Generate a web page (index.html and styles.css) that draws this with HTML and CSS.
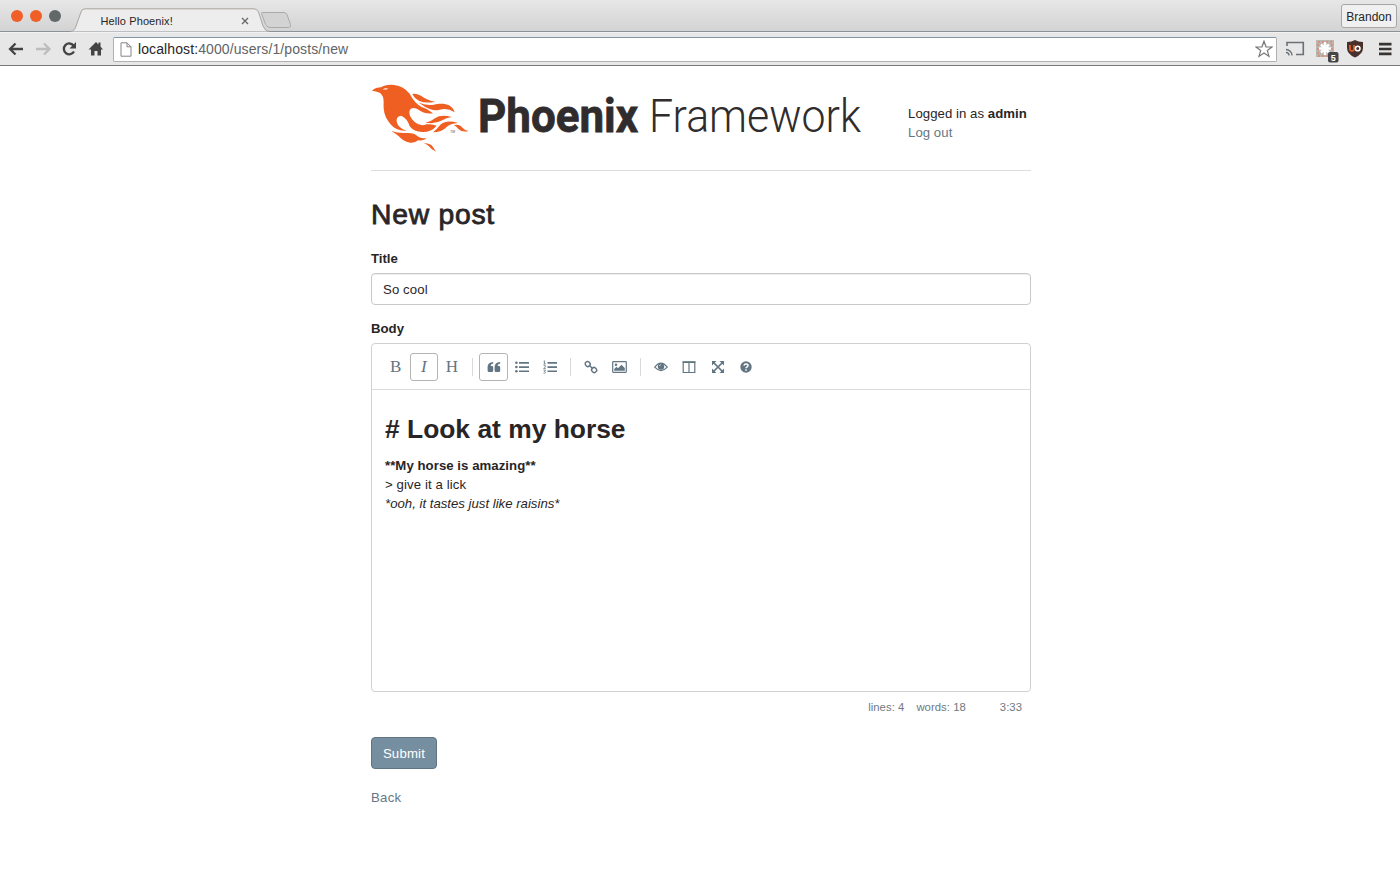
FILE: index.html
```html
<!DOCTYPE html>
<html lang="en">
<head>
<meta charset="utf-8">
<title>Hello Phoenix!</title>
<link rel="stylesheet" href="styles.css">
</head>
<body>
<header class="browser">
  <div class="tabstrip">
    <div class="lights"><i class="light"></i><i class="light"></i><i class="light light-off"></i></div>
    <div class="tab">
      <svg class="tab-shape" width="222" height="24" viewBox="0 0 222 24"><path d="M0 23.5C4 23 5 21 6 18L11 4Q12 .8 15 .8H184Q187 .8 188.500 4L193 18Q195 23 199 23.500" fill="#ededed" stroke="#aaa49f"/><path d="M191.500 5.500Q191 4.500 192.500 4.500H214Q216 4.500 217 6.500L220.500 16.500Q221 19.500 218.500 19.500H200Q197 19.500 195.500 16.500Z" fill="#d3d3d3" stroke="#aaa"/></svg>
      <span class="tab-title">Hello Phoenix!</span>
      <svg class="tab-close" width="8" height="8" viewBox="0 0 8 8"><path d="M1 1l6 6M7 1L1 7" stroke="#666" stroke-width="1.300"/></svg>
    </div>
    <div class="profile">Brandon</div>
  </div>
  <div class="toolbar">
    <svg class="nav" width="106" height="32" viewBox="0 0 106 32" fill="none" stroke="#444" stroke-width="2.300">
      <path d="M10 16H23M15.500 10.500L10 16L15.500 21.500"/>
      <path d="M36 16H49M44 10.500L49.500 16L44 21.500" stroke="#bdbdbd"/>
      <path d="M73.500 12.500A5.400 5.400 0 1 0 74 18.500"/><path d="M76 9V15.500H69.500Z" fill="#444" stroke="none"/>
      <path d="M88.500 16.500L96 9L98.500 11.500V9.500H100.500V13.500L103 16.500H101V22.500H97.500V18H94.500V22.500H91V16.500Z" fill="#444" stroke="none"/>
    </svg>
    <div class="address">
      <svg width="12" height="15" viewBox="0 0 12 15"><path d="M1 .8H7L11 4.800V14.200H1ZM7 .8V4.800H11" fill="#fff" stroke="#858585"/></svg>
      <span class="url"><b>localhost:</b>4000/users/1/posts/new</span>
      <svg class="star" width="18" height="18" viewBox="0 0 18 18"><path d="M9 1.200L11 6.800L17 7L12.300 10.600L14 16.400L9 13L4 16.400L5.700 10.600L1 7L7 6.800Z" fill="#fff" stroke="#777" stroke-width="1.200"/></svg>
    </div>
    <svg class="extensions" width="116" height="30" viewBox="1284 34 116 30">
      <path d="M1287 46V42.500H1303.300V54.500H1296" fill="none" stroke="#697176" stroke-width="1.600"/><path d="M1286 49.500A6 6 0 0 1 1292 55.500M1286 52.500A3 3 0 0 1 1289 55.500" fill="none" stroke="#697176" stroke-width="1.300"/>
      <path d="M1316 40H1334V57H1316Z" fill="#b9b5b3"/><path d="M1318 42H1332V56H1318Z" fill="none" stroke="#ed7040" stroke-dasharray="2 2"/><path d="M1325 42V55M1319 48.500H1331M1321 44.500L1329 52.500M1329 44.500L1321 52.500" stroke="#fff" stroke-width="2.500"/>
      <rect x="1328" y="52" width="10.500" height="10.500" rx="2" fill="#454545"/><text x="1333.200" y="60.500" class="badge-text">5</text>
      <path d="M1355 40Q1358 42 1363 42V48Q1363 54 1355 57.500Q1347 54 1347 48V42Q1352 42 1355 40Z" fill="#49302b"/><path d="M1350 45V49Q1350 51 1352 51T1354 49V45" fill="none" stroke="#f06127" stroke-width="1.600"/><circle cx="1357.700" cy="48.500" r="2.300" fill="none" stroke="#fff" stroke-width="1.600"/>
      <path d="M1379 44.200H1391.500M1379 49H1391.500M1379 53.800H1391.500" stroke="#383432" stroke-width="2.700"/>
    </svg>
  </div>
</header>
<main class="container">
  <div class="header">
    <svg class="logo" width="500" height="84" viewBox="0 0 500 84" role="img" aria-label="Phoenix Framework">
      <g transform="scale(.33333) translate(-21 0)" fill="#f05f22">
        <path d="M24 44Q36 34 51 34Q65 24 91 27Q119 31 137 53Q151 81 173 93Q190 97 207 112Q183 116 160 99Q143 91 137 103Q132 119 151 137Q169 153 187 145Q205 143 218 149Q202 168 177 168Q151 169 137 151Q130 127 112 119Q96 120 98 137Q102 155 127 164Q97 166 79 144Q61 124 59 97C58 80 63 61 47 50Q36 45 24 44Z"/>
        <path d="M145 54Q155 51 171 59Q189 73 214 77Q187 83 166 75Q151 67 145 54Z"/>
        <path d="M163 79Q181 89 210 86C229 81 264 79 272 109Q250 94 227 101C205 107 184 95 163 79Z"/>
        <path d="M184 140Q201 137 214 126Q231 114 263 123Q246 126 235 133Q214 145 184 140Z"/>
        <path d="M207 169Q220 158 229 146Q249 130 282 141Q258 143 248 153Q233 169 207 169Z"/>
        <path d="M270 147Q286 143 296 156Q302 163 314 165Q295 170 284 160Q279 153 270 147Z"/>
        <path d="M82 165Q101 172 125 171Q150 169 160 180Q169 188 188 187Q181 195 163 193Q153 201 139 200C112 196 110 180 82 165Z"/>
        <path d="M180 202Q199 201 207 213L216 227Q202 221 194 210Q189 205 180 202Z"/>
        <path d="M56 40Q64 35 73 38Q65 42 56 40Z" fill="#fff"/>
        <text x="259" y="171" class="trademark">TM</text>
      </g>
      <text x="107" y="56" textLength="160" lengthAdjust="spacingAndGlyphs" class="word-bold">Phoenix</text>
      <text x="278" y="56" textLength="212" lengthAdjust="spacingAndGlyphs" class="word-light">Framework</text>
    </svg>
    <div class="session"><div>Logged in as <b>admin</b></div><a>Log out</a></div>
  </div>
  <h2>New post</h2>
  <label>Title</label>
  <div class="input">So cool</div>
  <label>Body</label>
  <div class="editor">
    <div class="editor-bar">
      <span class="tool serif">B</span><span class="tool serif active"><i>I</i></span><span class="tool serif">H</span><i class="separator"></i>
      <span class="tool active"><svg width="14" height="14" viewBox="0 0 14 14"><path d="M6.200 2V3.500Q3.700 3.700 3.600 6H4.800Q6.200 6 6.200 7.400V10.500Q6.200 12 4.800 12H2Q.6 12 .6 10.500V7Q.6 2.400 6.200 2ZM13.200 2V3.500Q10.700 3.700 10.600 6H11.800Q13.200 6 13.200 7.400V10.500Q13.200 12 11.800 12H9Q7.600 12 7.600 10.500V7Q7.600 2.400 13.200 2Z"/></svg></span>
      <span class="tool"><svg width="14" height="14" viewBox="0 0 14 14"><circle cx="1.400" cy="2.800" r="1.300"/><circle cx="1.400" cy="7" r="1.300"/><circle cx="1.400" cy="11.200" r="1.300"/><path d="M4 2h10v1.700H4zM4 6.200h10v1.700H4zM4 10.400h10v1.700H4z"/></svg></span>
      <span class="tool"><svg width="14" height="14" viewBox="0 0 14 14"><path d="M4.500 2h9.500v1.700H4.500zM4.500 6.200h9.500v1.700H4.500zM4.500 10.400h9.500v1.700H4.500z"/><path d="M.5 1.400L1.600 .8V4M.4 4H2.800M.6 5.700H2.500V6.800L.6 8.600H2.800M.5 10.200H2.500L1.500 11.500Q2.700 11.700 2.300 12.800Q1.500 13.700 .4 13" fill="none" stroke="#627582" stroke-width=".8"/></svg></span>
      <i class="separator"></i>
      <span class="tool"><svg width="14" height="14" viewBox="0 0 14 14" fill="none" stroke="#627582" stroke-width="1.400"><rect x="1.200" y="1.700" width="5" height="4.600" rx="2" transform="rotate(45 3.700 4)"/><rect x="7.600" y="7.700" width="5" height="4.600" rx="2" transform="rotate(45 10.100 10)"/><path d="M5 5L9 9"/></svg></span>
      <span class="tool"><svg width="15" height="14" viewBox="0 0 15 14"><rect x=".7" y="1.700" width="13.600" height="10.600" rx=".7" fill="none" stroke="#627582" stroke-width="1.200"/><circle cx="4" cy="4.800" r="1.300"/><path d="M2.200 10.800V9L4.500 6.800L6 8.200L9.500 4.800L12.800 8V10.800Z"/></svg></span>
      <i class="separator"></i>
      <span class="tool"><svg width="14" height="14" viewBox="0 0 14 14"><path d="M.7 7.200Q7 -1 13.300 7.200Q7 14 .7 7.200Z" fill="none" stroke="#627582" stroke-width="1.100"/><circle cx="7" cy="6.500" r="3.200"/><path d="M5.500 6Q5.600 4.900 6.800 4.700" fill="none" stroke="#fff" stroke-width=".7"/></svg></span>
      <span class="tool"><svg width="14" height="14" viewBox="0 0 14 14"><path d="M1.200 2H12.800V12.500H1.200ZM7 2V12.500" fill="none" stroke="#627582" stroke-width="1.200"/><path d="M.6 1.300H13.400V3H.6Z"/></svg></span>
      <span class="tool"><svg width="14" height="14" viewBox="0 0 14 14"><path d="M1 1H5.500L1 5.500ZM13 1V5.500L8.500 1ZM1 13V8.500L5.500 13ZM13 13H8.500L13 8.500Z"/><path d="M2.500 2.500L11.500 11.500M11.500 2.500L2.500 11.500" stroke="#627582" stroke-width="1.700"/></svg></span>
      <span class="tool"><svg width="14" height="14" viewBox="0 0 14 14"><circle cx="7" cy="7" r="5.700"/><path d="M5 5.600Q5.200 3.900 7 3.900Q9 3.900 9 5.500Q9 6.500 7.800 7.100Q7 7.500 7 8.300M7 9.200V10.700" fill="none" stroke="#fff" stroke-width="1.500"/></svg></span>
    </div>
    <div class="editor-text">
      <h1># Look at my horse</h1>
      <div class="strong-line"><b>**My horse is amazing**</b></div>
      <div class="quote-line">&gt; give it a lick</div>
      <div class="em-line"><i>*ooh, it tastes just like raisins*</i></div>
    </div>
  </div>
  <div class="status"><span class="lines">lines: 4</span><span class="words">words: 18</span><span>3:33</span></div>
  <div class="submit">Submit</div>
  <a class="back">Back</a>
</main>
</body>
</html>
```
FILE: styles.css
```css
* { box-sizing: border-box; }
body { margin: 0; height: 896px; overflow: hidden; background: #fff; color: #292526; font: 13.2px/18.85px "Liberation Sans", Arial, sans-serif; }
svg { display: block; flex: none; }
.browser { height: 66px; border-bottom: 1px solid #77797a; background: #e7e7e7; }
.tabstrip { display: flex; height: 32px; border-bottom: 1px solid #8b9298; background: linear-gradient(#e7e7e7, #d3d3d3); }
.lights { display: flex; gap: 7px; width: 70px; padding: 10px 0 0 11px; }
.light { width: 12px; height: 12px; border-radius: 50%; background: #f15f28; }
.light-off { background: #626868; }
.tab { position: relative; width: 222px; height: 24px; margin-top: 8px; }
.tab-title { position: absolute; left: 30.500px; top: 4px; font-size: 11px; letter-spacing: .1px; }
.tab-close { position: absolute; left: 171px; top: 9px; }
.profile { width: 56px; height: 24px; margin: 4px 3px 0 auto; border: 1px solid #aaa6a3; border-radius: 3px; background: #f0f0f0; font-size: 12px; line-height: 24px; text-align: center; }
.toolbar { display: flex; align-items: center; height: 33px; border-top: 1px solid #f2f2f2; }
.nav { margin-right: 7px; }
.address { display: flex; align-items: center; width: 1164px; height: 25px; padding: 0 3px 0 6px; border: 1px solid #b0b0b0; border-top-color: #8195a4; border-radius: 2px; background: #fff; }
.url { margin-left: 6px; font-size: 14px; letter-spacing: .1px; color: #626466; }
.url b { font-weight: 400; color: #292526; }
.star { margin-left: auto; }
.extensions { margin-left: 7px; }
.badge-text { font: bold 9px "Liberation Sans", sans-serif; fill: #fff; text-anchor: middle; }
.container { width: 660px; margin-left: 371px; }
.header { display: flex; height: 105px; padding-top: 10px; border-bottom: 1px solid #dedede; }
.logo { overflow: visible; }
.word-bold { font: 700 47px Roboto, sans-serif; fill: #302c2d; stroke: #302c2d; stroke-width: .8px; }
.word-light { font: 300 46.500px Roboto, sans-serif; fill: #302c2d; }
.trademark { font: 10px "Liberation Sans", sans-serif; fill: #555; }
.session { margin: 29px 0 0 37px; white-space: nowrap; letter-spacing: .05px; }
.session a, .back { color: #657783; }
.back { letter-spacing: .3px; }
h2 { margin: 27px 0 20px; font-size: 28.3px; font-weight: 500; line-height: 32px; letter-spacing: .75px; -webkit-text-stroke: .8px #292526; }
label { display: block; height: 19px; margin-bottom: 4px; font-weight: 700; }
.input { height: 32px; margin-bottom: 15px; padding: 0 11px; border: 1px solid #cbc9c8; border-radius: 4px; line-height: 31px; letter-spacing: .1px; box-shadow: inset 0 1px 1px #eee; }
.editor { height: 349px; border: 1px solid #d1d1d1; border-radius: 4px; }
.editor-bar { display: flex; align-items: center; height: 46px; padding-left: 9.500px; border-bottom: 1px solid #dcdcdc; }
.tool { display: flex; align-items: center; justify-content: center; width: 28.200px; height: 28px; border: 1px solid transparent; border-radius: 3px; fill: #627582; color: #627582; }
.active { border-color: #b6b3b1; }
.serif { font: 17px "Liberation Serif", serif; }
.separator { width: 1px; height: 18px; margin: 0 6.200px; background: #d9d9d9; }
.editor-text { padding: 23px 13px; }
h1 { margin: 0 0 11px; font-size: 26.400px; line-height: 33px; }
.strong-line { letter-spacing: .05px; }
.quote-line { letter-spacing: .1px; }
.status { display: flex; justify-content: flex-end; margin-top: 6px; padding-right: 9px; font-size: 11.300px; letter-spacing: .05px; color: #6f7980; }
.lines { margin-right: 12px; }
.words { margin-right: 34px; }
.submit { width: 66px; height: 32px; margin: 20px 0 20px; border: 1px solid #617482; border-radius: 4px; background: #768fa0; color: #fff; line-height: 31px; letter-spacing: .2px; text-align: center; }
```
